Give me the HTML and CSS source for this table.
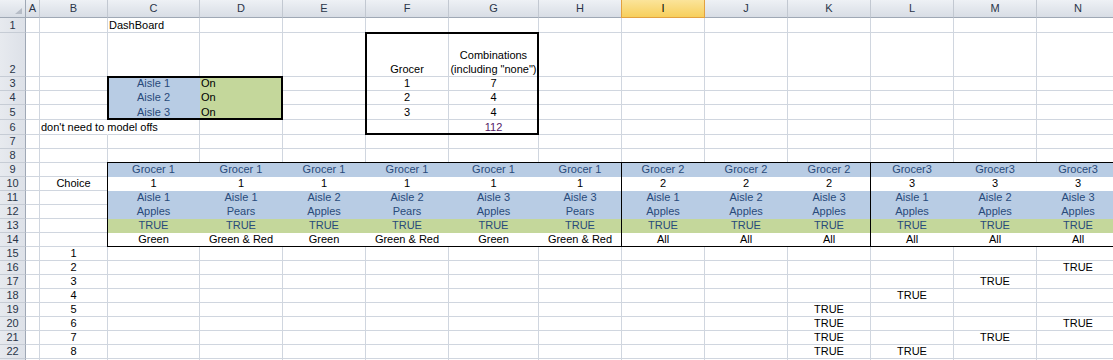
FILE: index.html
```html
<!DOCTYPE html>
<html lang="en">
<head>
<meta charset="utf-8">
<title>DashBoard</title>
<link rel="stylesheet" href="styles.css">
</head>
<body>
<div class="sheet">
  <!-- column headers -->
  <div class="row head">
    <span class="corner"><svg width="7" height="6" viewBox="0 0 7 6"><polygon points="7,0 7,6 0,6" fill="#b6bcc6"/></svg></span>
    <span>A</span><span>B</span><span>C</span><span>D</span><span>E</span><span>F</span><span>G</span><span>H</span><span class="sel">I</span><span>J</span><span>K</span><span>L</span><span>M</span><span>N</span>
  </div>

  <div class="row"><span>1</span><span></span><span></span><span class="l">DashBoard</span><span></span><span></span><span></span><span></span><span></span><span></span><span></span><span></span><span></span><span></span><span></span></div>

  <div class="row"><span>2</span><span></span><span></span><span></span><span></span><span></span><span>Grocer</span><span class="wrap">Combinations<br>(including "none")</span><span></span><span></span><span></span><span></span><span></span><span></span><span></span></div>

  <div class="row"><span>3</span><span></span><span></span><span class="bl">Aisle 1</span><span class="gr l blk">On</span><span></span><span>1</span><span>7</span><span></span><span></span><span></span><span></span><span></span><span></span><span></span></div>
  <div class="row"><span>4</span><span></span><span></span><span class="bl">Aisle 2</span><span class="gr l blk">On</span><span></span><span>2</span><span>4</span><span></span><span></span><span></span><span></span><span></span><span></span><span></span></div>
  <div class="row"><span>5</span><span></span><span></span><span class="bl">Aisle 3</span><span class="gr l blk">On</span><span></span><span>3</span><span>4</span><span></span><span></span><span></span><span></span><span></span><span></span><span></span></div>

  <div class="row"><span>6</span><span></span><span class="l spill">don't need to model offs</span><span></span><span></span><span></span><span></span><span class="pu">112</span><span></span><span></span><span></span><span></span><span></span><span></span><span></span></div>

  <div class="row"><span>7</span><span></span><span></span><span></span><span></span><span></span><span></span><span></span><span></span><span></span><span></span><span></span><span></span><span></span><span></span></div>
  <div class="row"><span>8</span><span></span><span></span><span></span><span></span><span></span><span></span><span></span><span></span><span></span><span></span><span></span><span></span><span></span><span></span></div>

  <!-- choice table -->
  <div class="row"><span>9</span><span></span><span></span><span class="bl">Grocer 1</span><span class="bl">Grocer 1</span><span class="bl">Grocer 1</span><span class="bl">Grocer 1</span><span class="bl">Grocer 1</span><span class="bl">Grocer 1</span><span class="bl">Grocer 2</span><span class="bl">Grocer 2</span><span class="bl">Grocer 2</span><span class="bl">Grocer3</span><span class="bl">Grocer3</span><span class="bl">Grocer3</span></div>
  <div class="row"><span>10</span><span></span><span>Choice</span><span class="wh">1</span><span class="wh">1</span><span class="wh">1</span><span class="wh">1</span><span class="wh">1</span><span class="wh">1</span><span class="wh">2</span><span class="wh">2</span><span class="wh">2</span><span class="wh">3</span><span class="wh">3</span><span class="wh">3</span></div>
  <div class="row"><span>11</span><span></span><span></span><span class="bl">Aisle 1</span><span class="bl">Aisle 1</span><span class="bl">Aisle 2</span><span class="bl">Aisle 2</span><span class="bl">Aisle 3</span><span class="bl">Aisle 3</span><span class="bl">Aisle 1</span><span class="bl">Aisle 2</span><span class="bl">Aisle 3</span><span class="bl">Aisle 1</span><span class="bl">Aisle 2</span><span class="bl">Aisle 3</span></div>
  <div class="row"><span>12</span><span></span><span></span><span class="bl">Apples</span><span class="bl">Pears</span><span class="bl">Apples</span><span class="bl">Pears</span><span class="bl">Apples</span><span class="bl">Pears</span><span class="bl">Apples</span><span class="bl">Apples</span><span class="bl">Apples</span><span class="bl">Apples</span><span class="bl">Apples</span><span class="bl">Apples</span></div>
  <div class="row"><span>13</span><span></span><span></span><span class="gr">TRUE</span><span class="gr">TRUE</span><span class="gr">TRUE</span><span class="gr">TRUE</span><span class="gr">TRUE</span><span class="gr">TRUE</span><span class="gr">TRUE</span><span class="gr">TRUE</span><span class="gr">TRUE</span><span class="gr">TRUE</span><span class="gr">TRUE</span><span class="gr">TRUE</span></div>
  <div class="row"><span>14</span><span></span><span></span><span class="wh">Green</span><span class="wh">Green &amp; Red</span><span class="wh">Green</span><span class="wh">Green &amp; Red</span><span class="wh">Green</span><span class="wh">Green &amp; Red</span><span class="wh">All</span><span class="wh">All</span><span class="wh">All</span><span class="wh">All</span><span class="wh">All</span><span class="wh">All</span></div>

  <!-- choice rows -->
  <div class="row"><span>15</span><span></span><span>1</span><span></span><span></span><span></span><span></span><span></span><span></span><span></span><span></span><span></span><span></span><span></span><span></span></div>
  <div class="row"><span>16</span><span></span><span>2</span><span></span><span></span><span></span><span></span><span></span><span></span><span></span><span></span><span></span><span></span><span></span><span>TRUE</span></div>
  <div class="row"><span>17</span><span></span><span>3</span><span></span><span></span><span></span><span></span><span></span><span></span><span></span><span></span><span></span><span></span><span>TRUE</span><span></span></div>
  <div class="row"><span>18</span><span></span><span>4</span><span></span><span></span><span></span><span></span><span></span><span></span><span></span><span></span><span></span><span>TRUE</span><span></span><span></span></div>
  <div class="row"><span>19</span><span></span><span>5</span><span></span><span></span><span></span><span></span><span></span><span></span><span></span><span></span><span>TRUE</span><span></span><span></span><span></span></div>
  <div class="row"><span>20</span><span></span><span>6</span><span></span><span></span><span></span><span></span><span></span><span></span><span></span><span></span><span>TRUE</span><span></span><span></span><span>TRUE</span></div>
  <div class="row"><span>21</span><span></span><span>7</span><span></span><span></span><span></span><span></span><span></span><span></span><span></span><span></span><span>TRUE</span><span></span><span>TRUE</span><span></span></div>
  <div class="row"><span>22</span><span></span><span>8</span><span></span><span></span><span></span><span></span><span></span><span></span><span></span><span></span><span>TRUE</span><span>TRUE</span><span></span><span></span></div>
  <div class="row"><span></span><span></span><span></span><span></span><span></span><span></span><span></span><span></span><span></span><span></span><span></span><span></span><span></span><span></span><span></span></div>

  <!-- range borders drawn over the cells -->
  <div class="frames">
    <div class="frame medium aisles"></div>
    <div class="frame medium combos"></div>
    <div class="frame thin g1"></div>
    <div class="frame thin g2"></div>
    <div class="frame thin g3"></div>
  </div>
</div>
</body>
</html>
```

FILE: styles.css
```css
:root {
  --cols: 26px 14px 68px 92px 83px 83px 83px 90px 83px 83px 83px 83px 83px 83px 83px;
  --rows: 18px 15px 44px 14px 14px 15px 15px repeat(17, 14px);
  --grid: #d0d6df;
  --blue: #b8cce4;
  --green: #c4d79b;
  --ink-blue: #284a7a;
}

html, body {
  margin: 0;
  padding: 0;
  background: #fff;
}

body {
  overflow: hidden;
  width: 1113px;
  height: 360px;
  font-family: "Liberation Sans", Arial, sans-serif;
  font-size: 11px;
  color: #000;
}

.sheet {
  position: relative;
  display: grid;
  grid-template-columns: var(--cols);
  grid-template-rows: var(--rows);
  width: 1120px;
  background: #fff;
}

.row {
  display: contents;
}

/* worksheet cells */
.row > span {
  box-sizing: border-box;
  min-width: 0;
  display: flex;
  align-items: flex-end;
  justify-content: center;
  line-height: 13px;
  white-space: nowrap;
  border-right: 1px solid var(--grid);
  border-bottom: 1px solid var(--grid);
}

.row > span.l {
  justify-content: flex-start;
  padding-left: 1px;
}

.row > span.spill {
  border-right-color: transparent;
}

.row > span.wrap {
  text-align: center;
  line-height: 14px;
}

.row > span.bl {
  background: var(--blue);
  border-color: var(--blue);
  color: var(--ink-blue);
}

.row > span.gr {
  background: var(--green);
  border-color: var(--green);
  color: var(--ink-blue);
}

.row > span.gr.blk {
  color: #000;
}

.row > span.wh {
  background: #fff;
  border-color: #fff;
}

.row > span.pu {
  color: #561a66;
}

/* row numbers */
.row > span:first-child {
  background: linear-gradient(90deg, #e7eaef, #dde1e8);
  border-right: 1px solid #9fa8b5;
  border-bottom: 1px solid #c6ccd5;
  color: #2a3548;
}

/* column letters */
.row.head > span {
  align-items: center;
  line-height: 17px;
  background: linear-gradient(#eef1f5, #d8dde5);
  border-right: 1px solid #c2c8d1;
  border-bottom: 1px solid #9fa8b5;
  color: #2a3548;
}

.row.head > span.corner {
  position: relative;
  border-right-color: #9fa8b5;
}

.corner svg {
  position: absolute;
  right: 3px;
  bottom: 3px;
}

.row.head > span.sel {
  background: linear-gradient(#fbe49a, #f7cf5c);
  border-right-color: #e2a140;
  border-bottom-color: #e2a140;
  box-shadow: -1px 0 0 #e2a140;
  color: #000;
}

/* range borders */
.frames {
  position: absolute;
  inset: 0;
  display: grid;
  grid-template-columns: var(--cols);
  grid-template-rows: var(--rows);
  pointer-events: none;
}

.frame {
  box-sizing: border-box;
  margin: -1px 0 0 -1px;
  border: 1px solid #000;
}

.frame.medium {
  border-width: 2px;
}

.aisles { grid-column: 4 / 6; grid-row: 4 / 7; }
.combos { grid-column: 7 / 9; grid-row: 3 / 8; }
.g1 { grid-column: 4 / 10; grid-row: 10 / 16; }
.g2 { grid-column: 10 / 13; grid-row: 10 / 16; }
.g3 { grid-column: 13 / 16; grid-row: 10 / 16; }
```
